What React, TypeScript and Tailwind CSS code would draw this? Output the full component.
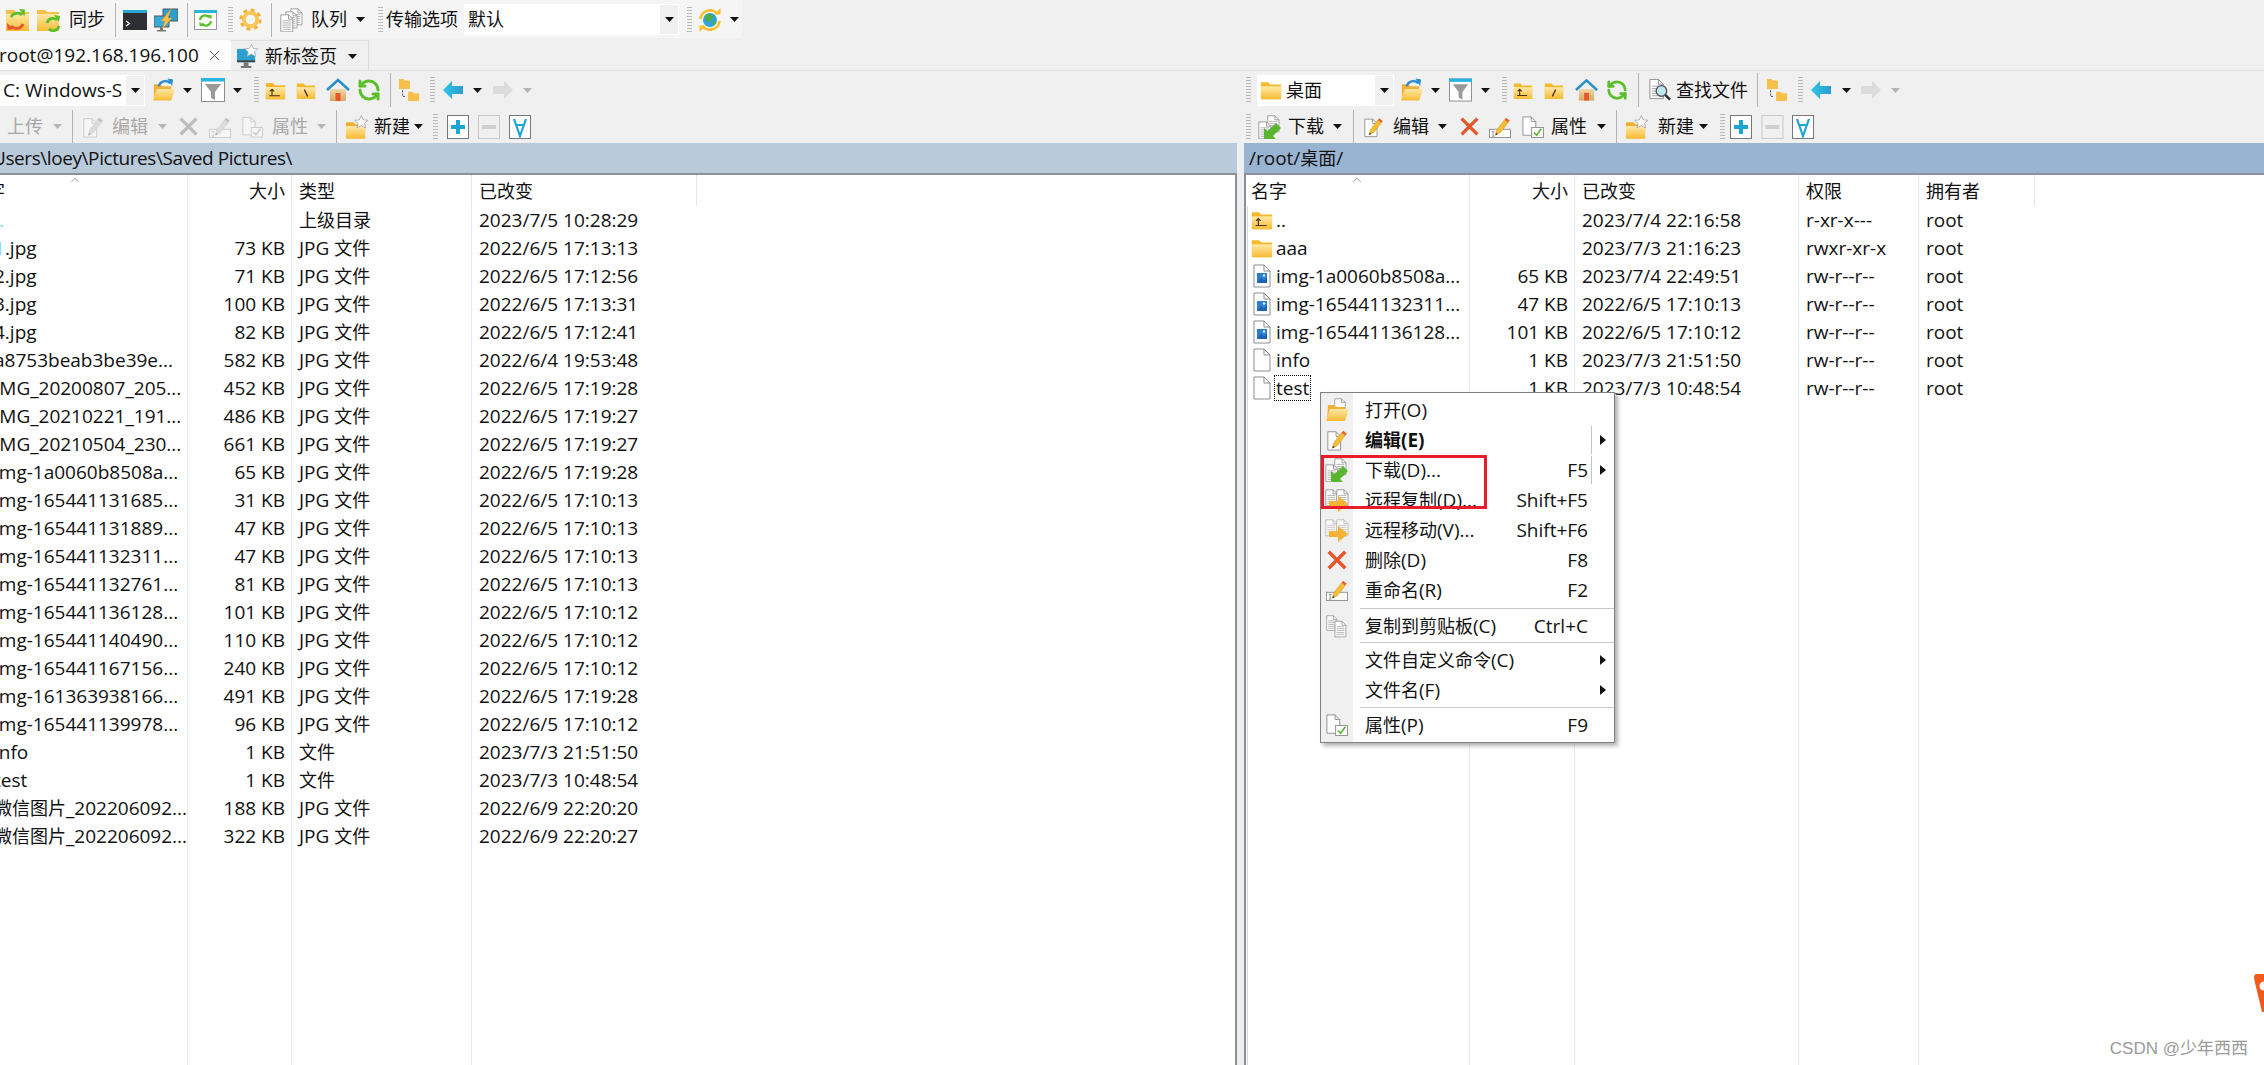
import React from "react";
import { RefreshCcw, X, ChevronUp } from "lucide-react";

// ---- small toolbar bits ----
const Caret = ({ c = "", gray = false }: { c?: string; gray?: boolean }) => (
  <svg viewBox="0 0 9 5" className={`w-[9px] h-[5px] shrink-0 ${c}`}>
    <path d="M0 0h9L4.5 5z" fill={gray ? "#b5b5b5" : "#111"} />
  </svg>
);
const Sep = ({ c = "" }: { c?: string }) => <div className={`w-[1px] h-[34px] bg-[#b4b4b4] shrink-0 ${c}`} />;
const Grip = ({ c = "" }: { c?: string }) => (
  <div className={`w-[5px] h-[26px] shrink-0 bg-[repeating-linear-gradient(#b9b9b9_0_1px,transparent_1px_3px)] ${c}`} />
);
const Label = ({ t, c = "" }: { t: string; c?: string }) => (
  <span className={`text-[18px] whitespace-nowrap shrink-0 ${c}`}>{t}</span>
);

// splits a string so chinese runs get the 18px size and latin stays 19px
const mix = (s: string) =>
  s.split(/([\u4e00-\u9fff]+)/).map((p, i) =>
    /[\u4e00-\u9fff]/.test(p) ? (
      <span key={i} className="text-[18px]">
        {p}
      </span>
    ) : (
      p
    )
  );

// ---- icons ----
type IP = { c?: string };
const Svg = ({ c = "", children, v = "0 0 24 24" }: IP & { children: React.ReactNode; v?: string }) => (
  <svg viewBox={v} fill="none" className={`shrink-0 ${c}`}>
    {children}
  </svg>
);
const FolderPath = () => (
  <>
    <path d="M1 3.5h8l2 2.5h12v16H1z" fill="#f6b82c" />
    <path d="M1 8h22v14H1z" fill="url(#fy)" />
  </>
);
const Pencil = ({ d = "" }: { d?: string }) => (
  <g transform={d}>
    <path d="M7 21l1.5-6L17 4l4 3-8.5 11z" fill="#f7bd35" stroke="#c98a12" strokeWidth=".5" />
    <path d="M17 4l1.6-2 4 3L21 7z" fill="#e8632a" />
    <path d="M7 21l.6-2.6 2 1.5z" fill="#333" />
  </g>
);
const Doc = ({ x = 0, y = 0, s = 1, lines = false }: { x?: number; y?: number; s?: number; lines?: boolean }) => (
  <g transform={`translate(${x} ${y}) scale(${s})`}>
    <path d="M1 1h9l5 5v15H1z" fill="#fff" stroke="#8d8d8d" />
    <path d="M10 1v5h5" stroke="#8d8d8d" />
    {lines && <path d="M3 8h10M3 10.5h10M3 13h10M3 15.5h10M3 18h10" stroke="#a5a5a5" />}
  </g>
);
const SyncFolders = ({ c }: IP) => (
  <Svg c={c} v="0 0 25 24">
    <path d="M1 2h8l2 2h13v19H1z" fill="#f7c04a" />
    <path d="M1 6h23v17H1z" fill="url(#fy)" />
    <path d="M6 9a7 7 0 0 1 11-2" stroke="#5cbf2a" strokeWidth="2.8" />
    <path d="M14 1l6 .5-.5 7z" fill="#5cbf2a" />
    <path d="M18 16a7 7 0 0 1-12 2" stroke="#e8562a" strokeWidth="2.8" />
    <path d="M2 15l.5 7 6-1z" fill="#e8562a" />
  </Svg>
);
const FolderSync = ({ c }: IP) => (
  <Svg c={c} v="0 0 25 24">
    <path d="M1 2h8l2 2h12v19H1z" fill="#f7c04a" />
    <path d="M1 6h22v17H1z" fill="url(#fy)" />
    <path d="M11 15a6 6 0 0 1 10-3" stroke="#5cbf2a" strokeWidth="2.8" />
    <path d="M18 7l6 1-1 6z" fill="#5cbf2a" />
    <path d="M23 18a6 6 0 0 1-10 3" stroke="#5cbf2a" strokeWidth="2.8" />
  </Svg>
);
const Terminal = ({ c }: IP) => (
  <Svg c={c} v="0 0 24 20">
    <rect width="24" height="20" fill="#2d2f33" />
    <rect width="24" height="3" fill="#2aa7cf" />
    <path d="M3 11l3.5 2.5L3 16" stroke="#fff" strokeWidth="1.2" />
  </Svg>
);
const Putty = ({ c }: IP) => (
  <Svg c={c} v="0 0 24 24">
    <path d="M9 1h15v12H9z" fill="#2a9fd0" stroke="#555" />
    <path d="M0 8h15v11H0z" fill="#37a8d8" stroke="#555" />
    <path d="M6 19h3v3h3v1.5H3V22h3z" fill="#777" />
    <path d="M17 1L7 13h4l-3 8 10-11h-4z" fill="#f7c04a" stroke="#d99a17" strokeWidth=".4" />
  </Svg>
);
const SyncPage = ({ c }: IP) => (
  <Svg c={c} v="0 0 23 20">
    <rect x=".5" y=".5" width="22" height="19" fill="#fff" stroke="#9a9a9a" />
    <rect width="23" height="3" fill="#2ab3dd" />
    <path d="M6 10a5 5 0 0 1 9-2.5M17 11a5 5 0 0 1-9 2.5" stroke="#5cbf2a" strokeWidth="2.2" />
    <path d="M13 5l4.5 0 0 4.5zM10 16l-4.5 0 0-4.5z" fill="#5cbf2a" />
  </Svg>
);
const Gear = ({ c }: IP) => (
  <Svg c={c}>
    <circle cx="12" cy="12" r="9.6" stroke="#f2b035" strokeWidth="4" strokeDasharray="3.8 3.74" />
    <circle cx="12" cy="12" r="7" stroke="#f8c556" strokeWidth="4" />
  </Svg>
);
const Queue = ({ c }: IP) => (
  <Svg c={c}>
    <Doc x={11} y={0} s={0.8} lines />
    <Doc x={6} y={3} s={0.8} lines />
    <Doc x={1} y={6} s={0.85} lines />
  </Svg>
);
const Globe = ({ c }: IP) => (
  <Svg c={c}>
    <circle cx="12" cy="12" r="7" fill="#2fa3d8" />
    <path d="M8 7c3-2 6-1 7 1s-2 3-3 5-3 1-4-1-1-3 0-5zM15 14c2-1 3 0 3 1l-3 3z" fill="#4cae3c" />
    <path d="M2.5 11a9.5 9.5 0 0 1 17-5M21.5 13a9.5 9.5 0 0 1-17 5" stroke="#f7c02c" strokeWidth="2.6" />
    <path d="M16 6.5h6.5V0zM8 17.5H1.5V24z" fill="#f7c02c" />
  </Svg>
);
const MonitorStar = ({ c }: IP) => (
  <Svg c={c} v="0 0 22 26">
    <path d="M0 5h19v14H0z" fill="#2a9fd0" />
    <path d="M0 17h19v2H0z" fill="#444" />
    <path d="M7 19h5v4h3v2H4v-2h3z" fill="#777" />
    <path d="M15 0l2 4.5 5 .5-3.700 3.300L19.500 13 15 10.500 10.500 13l1.200-4.700L8 5l5-.5z" fill="#fff" stroke="#9aa0a6" strokeWidth=".7" />
  </Svg>
);
const OpenFolder = ({ c }: IP) => (
  <Svg c={c}>
    <path d="M2 6h7l2 2h9v14H2z" fill="#f2b035" />
    <path d="M5 11h19l-4 12H1z" fill="url(#fy)" />
    <path d="M7 8a7 7 0 0 1 12-3" stroke="#2a8fd0" strokeWidth="2.4" />
    <path d="M16 0l6 1-1 7z" fill="#2a8fd0" />
  </Svg>
);
const Filter = ({ c }: IP) => (
  <Svg c={c}>
    <rect x=".5" y=".5" width="23" height="23" fill="#fff" stroke="#8d8d8d" />
    <rect width="24" height="3.500" fill="#2ab3dd" />
    <path d="M4 6h16l-6 8v8l-4-2v-6z" fill="#9a9a9a" />
  </Svg>
);
const FolderUp = ({ c, slash }: IP & { slash?: "up" | "/" | "\\" }) => (
  <Svg c={c}>
    <FolderPath />
    {slash === "up" && <path d="M5 18h12M8 18v-7M5.500 13L8 10.500 10.500 13" stroke="#4a3510" strokeWidth="1.300" />}
    {slash === "/" && <path d="M10 19l4-8" stroke="#4a3510" strokeWidth="1.600" />}
    {slash === "\\" && <path d="M14 19l-4-8" stroke="#4a3510" strokeWidth="1.600" />}
  </Svg>
);
const Home = ({ c }: IP) => (
  <Svg c={c}>
    <path d="M4 11h16v12H4z" fill="url(#ft)" />
    <path d="M9.500 15h5v8h-5z" fill="#e8562a" />
    <path d="M1 12L12 2l11 10" stroke="#2a8fc8" strokeWidth="2.600" />
  </Svg>
);
const Refresh = ({ c }: IP) => <RefreshCcw className={`shrink-0 ${c}`} color="#5cbf2a" strokeWidth={3} />;
const Find = ({ c }: IP) => (
  <Svg c={c}>
    <Doc x={1} y={0} s={1} lines />
    <circle cx="14" cy="13" r="5.500" fill="#bfe6f5" stroke="#555" strokeWidth="1.400" />
    <path d="M18 17l5 5" stroke="#333" strokeWidth="2.600" />
  </Svg>
);
const Tree = ({ c }: IP) => (
  <Svg c={c}>
    <path d="M1 0h5l1 1.500h6V11H1z" fill="#f7c04a" />
    <path d="M11 14h5l1 1.500h6V24H11z" fill="#f7c04a" />
    <path d="M5 12.500v6.500h4" stroke="#333" strokeDasharray="2 1.500" />
  </Svg>
);
const Arrow = ({ c, dir, gray }: IP & { dir: "l" | "r"; gray?: boolean }) => (
  <Svg c={c} v="0 0 20 18">
    <path
      d={dir === "l" ? "M0 9l9-9v5h11v8H9v5z" : "M20 9l-9-9v5H0v8h11v5z"}
      fill={gray ? "#dcdcdc" : "url(#fc)"}
    />
  </Svg>
);
const Download = ({ c }: IP) => (
  <Svg c={c}>
    <Doc x={9} y={0} s={0.8} lines />
    <Doc x={0} y={6} s={0.85} lines />
    <path d="M6 24V13l3.500 3L18 8l5 5-8 8 3 3z" fill="#5cb531" />
  </Svg>
);
const Edit = ({ c }: IP) => (
  <Svg c={c}>
    <Doc x={1} y={2} s={1} />
    <Pencil />
  </Svg>
);
const Cross = ({ c }: IP) => (
  <Svg c={c}>
    <path d="M3 3l18 18M21 3L3 21" stroke="#e4572a" strokeWidth="3.800" />
  </Svg>
);
const Rename = ({ c }: IP) => (
  <Svg c={c}>
    <rect x=".5" y="14.500" width="23" height="9" fill="#fff" stroke="#8d8d8d" />
    <path d="M3 17h3M3 22h3M4.500 17v5" stroke="#777" strokeWidth=".8" />
    <Pencil />
  </Svg>
);
const Props = ({ c }: IP) => (
  <Svg c={c}>
    <Doc x={0} y={0} s={1} />
    <rect x="10.500" y="12.500" width="13" height="11" fill="#fff" stroke="#8d8d8d" />
    <path d="M13 18l3 3 5-7" stroke="#5cb531" strokeWidth="1.800" />
  </Svg>
);
const NewFolder = ({ c }: IP) => (
  <Svg c={c}>
    <path d="M1 7h8l2 2h10v15H1z" fill="#f2b035" />
    <path d="M1 11h20v13H1z" fill="url(#fy)" />
    <path d="M17 0l2 4.500 5 .5-3.700 3.300L21.500 13 17 10.500 12.500 13l1.200-4.700L10 5l5-.5z" fill="#fff" stroke="#9aa0a6" strokeWidth=".8" />
  </Svg>
);
const BoxIcon = ({ c, kind }: IP & { kind: "plus" | "minus" | "all" }) => (
  <Svg c={c} v="0 0 22 24">
    <rect x=".5" y=".5" width="21" height="23" fill={kind === "minus" ? "#f0f0f0" : "#fff"} stroke={kind === "minus" ? "#c8c8c8" : "#777"} />
    {kind === "plus" && <path d="M11 5v14M4 12h14" stroke="#1fa5d4" strokeWidth="4" />}
    {kind === "minus" && <path d="M4 12h14" stroke="#cfcfcf" strokeWidth="4" />}
    {kind === "all" && <path d="M5 4l6 17 6-17M7.500 10h7" stroke="#1fa5d4" strokeWidth="2.200" />}
  </Svg>
);
const FileIcon = ({ c, img }: IP & { img?: boolean }) => (
  <Svg c={c} v="0 0 18 24">
    <path d="M1 1h10l6 6v16H1z" fill="#fff" stroke="#8d8d8d" />
    <path d="M11 1v6h6" stroke="#8d8d8d" />
    {img && <rect x="4" y="9" width="10" height="10" fill="#2a7fd0" />}
    {img && <path d="M4 19l4-5 3 3 3-4v6z" fill="#1d5fb0" />}
    {img && <circle cx="11" cy="11.500" r="1.200" fill="#dff" />}
  </Svg>
);
const OpenDoc = ({ c }: IP) => (
  <Svg c={c}>
    <Doc x={9} y={0} s={0.75} />
    <path d="M3 7h6l2 2h9v13H2z" fill="#f2b035" />
    <path d="M5 11h19l-4 12H1z" fill="url(#fy)" />
  </Svg>
);
const TwoDocs = ({ c, arrow, faded }: IP & { arrow?: boolean; faded?: boolean }) => (
  <Svg c={c}>
    <g opacity={faded ? 0.6 : 1}>
      <Doc x={0} y={1} s={0.8} lines />
      <Doc x={11} y={1} s={0.8} lines />
    </g>
    {arrow && <path d="M4 13h9V8l10 8-10 8v-5H4z" fill="#f5b335" />}
  </Svg>
);
const CopyDocs = ({ c }: IP) => (
  <Svg c={c}>
    <Doc x={0} y={0} s={0.8} lines />
    <Doc x={9} y={6} s={0.85} lines />
  </Svg>
);

// ---- data ----
const leftRows = [
  ["..", "", "上级目录", "2023/7/5 10:28:29"],
  ["1.jpg", "73 KB", "JPG 文件", "2022/6/5 17:13:13"],
  ["2.jpg", "71 KB", "JPG 文件", "2022/6/5 17:12:56"],
  ["3.jpg", "100 KB", "JPG 文件", "2022/6/5 17:13:31"],
  ["4.jpg", "82 KB", "JPG 文件", "2022/6/5 17:12:41"],
  ["a8753beab3be39e...", "582 KB", "JPG 文件", "2022/6/4 19:53:48"],
  ["IMG_20200807_205...", "452 KB", "JPG 文件", "2022/6/5 17:19:28"],
  ["IMG_20210221_191...", "486 KB", "JPG 文件", "2022/6/5 17:19:27"],
  ["IMG_20210504_230...", "661 KB", "JPG 文件", "2022/6/5 17:19:27"],
  ["img-1a0060b8508a...", "65 KB", "JPG 文件", "2022/6/5 17:19:28"],
  ["img-165441131685...", "31 KB", "JPG 文件", "2022/6/5 17:10:13"],
  ["img-165441131889...", "47 KB", "JPG 文件", "2022/6/5 17:10:13"],
  ["img-165441132311...", "47 KB", "JPG 文件", "2022/6/5 17:10:13"],
  ["img-165441132761...", "81 KB", "JPG 文件", "2022/6/5 17:10:13"],
  ["img-165441136128...", "101 KB", "JPG 文件", "2022/6/5 17:10:12"],
  ["img-165441140490...", "110 KB", "JPG 文件", "2022/6/5 17:10:12"],
  ["img-165441167156...", "240 KB", "JPG 文件", "2022/6/5 17:10:12"],
  ["img-161363938166...", "491 KB", "JPG 文件", "2022/6/5 17:19:28"],
  ["img-165441139978...", "96 KB", "JPG 文件", "2022/6/5 17:10:12"],
  ["info", "1 KB", "文件", "2023/7/3 21:51:50"],
  ["test", "1 KB", "文件", "2023/7/3 10:48:54"],
  ["微信图片_202206092...", "188 KB", "JPG 文件", "2022/6/9 22:20:20"],
  ["微信图片_202206092...", "322 KB", "JPG 文件", "2022/6/9 22:20:27"],
];

const rightRows = [
  ["..", "", "2023/7/4 22:16:58", "r-xr-x---", "root"],
  ["aaa", "", "2023/7/3 21:16:23", "rwxr-xr-x", "root"],
  ["img-1a0060b8508a...", "65 KB", "2023/7/4 22:49:51", "rw-r--r--", "root"],
  ["img-165441132311...", "47 KB", "2022/6/5 17:10:13", "rw-r--r--", "root"],
  ["img-165441136128...", "101 KB", "2022/6/5 17:10:12", "rw-r--r--", "root"],
  ["info", "1 KB", "2023/7/3 21:51:50", "rw-r--r--", "root"],
  ["test", "1 KB", "2023/7/3 10:48:54", "rw-r--r--", "root"],
];

const rowIcon = (name: string) => {
  if (name === "..") return <FolderUp slash="up" c="w-[22px] h-[24px]" />;
  if (name === "aaa") return <FolderUp c="w-[22px] h-[24px]" />;
  if (name === "info" || name === "test") return <FileIcon c="w-[22px] h-[24px]" />;
  return <FileIcon img c="w-[22px] h-[24px]" />;
};

const NameColumn = ({ names, left }: { names: string[]; left?: boolean }) => (
  <div className="w-[226px] h-full border-r border-[#e6ecf6] shrink-0 overflow-hidden">
    <div className="relative h-[31px] leading-[32px] pl-[7px]">
      <span className="text-[18px]">名字</span>
      <ChevronUp className="absolute left-[106px] top-[-2px] w-[14px] h-[14px] text-[#777]" strokeWidth={1.2} />
    </div>
    <div className={`ml-[3px] pl-[3px] border-l h-full ${left ? "border-transparent" : "border-[#cddaf0]"}`}>
      {names.map((n, i) => (
        <div key={i} className="h-[28px] flex items-center whitespace-nowrap">
          {rowIcon(n)}
          {n === "test" && !left ? (
            <span className="ml-[1px] px-[1px] h-[26px] leading-[24px] border border-dotted border-black">{n}</span>
          ) : left && i === 0 ? (
            <span className="ml-[3px] text-[#7fdcf0]">{n}</span>
          ) : left && i === 1 ? (
            <span className="ml-[3px]">
              <span className="text-[#7fdcf0]">{n[0]}</span>
              {n.slice(1)}
            </span>
          ) : (
            <span className="ml-[3px]">{mix(n)}</span>
          )}
        </div>
      ))}
    </div>
  </div>
);

// the last column has its divider in the header only
const Column = ({ title, cells, w, right, last }: { title: string; cells: string[]; w: string; right?: boolean; last?: boolean }) => (
  <div className={`${w} h-full shrink-0 whitespace-nowrap flex flex-col ${right ? "text-right" : ""}`}>
    <div className={`h-[31px] shrink-0 leading-[32px] text-[18px] border-r border-[#e6e6e6] ${right ? "pr-[6px]" : "pl-[7px]"}`}>{title}</div>
    <div className={`flex-1 border-r ${last ? "border-transparent" : "border-[#e6ecf6]"} ${right ? "pr-[6px]" : "pl-[7px]"}`}>
      {cells.map((v, i) => (
        <div key={i} className="h-[28px] leading-[28px]">
          {mix(v)}
        </div>
      ))}
    </div>
  </div>
);

const MenuRow = ({
  icon,
  text,
  keys,
  arrow,
  split,
  bold,
}: {
  icon?: React.ReactNode;
  text: string;
  keys?: string;
  arrow?: boolean;
  split?: boolean;
  bold?: boolean;
}) => (
  <div className="h-[30px] flex items-center">
    <div className="w-[32px] flex justify-center shrink-0">{icon}</div>
    <div className={`ml-[12px] flex-1 whitespace-nowrap ${bold ? "font-bold" : ""}`}>{mix(text)}</div>
    <div className="whitespace-nowrap">{keys}</div>
    <div className={`w-[23px] ml-[3px] h-[28px] flex items-center justify-center border-l ${split ? "border-[#c4c4c4]" : "border-transparent"}`}>
      {arrow && (
        <svg viewBox="0 0 6 10" className="w-[6px] h-[10px]">
          <path d="M0 0l6 5-6 5z" fill="#111" />
        </svg>
      )}
    </div>
  </div>
);
const MenuSep = ({ c }: { c: string }) => <div className={`ml-[39px] h-[1px] bg-[#c8c8c8] ${c}`} />;

export default function App() {
  return (
    <div className="relative w-[2264px] h-[1065px] overflow-hidden bg-[#f0f0f0] text-[19px] text-[#111] font-['Open_Sans','Noto_Sans_CJK_SC',sans-serif]">
      <svg className="absolute w-0 h-0">
        <defs>
          <linearGradient id="fy" x1="0" y1="0" x2="0" y2="1">
            <stop offset="0" stopColor="#ffe9a8" />
            <stop offset="1" stopColor="#f6bb33" />
          </linearGradient>
          <linearGradient id="ft" x1="0" y1="0" x2="0" y2="1">
            <stop offset="0" stopColor="#f0d8a8" />
            <stop offset="1" stopColor="#d9a860" />
          </linearGradient>
          <linearGradient id="fc" x1="0" y1="0" x2="1" y2="0">
            <stop offset="0" stopColor="#2ec4e8" />
            <stop offset="1" stopColor="#2a9fd0" />
          </linearGradient>
        </defs>
      </svg>

      {/* main toolbar */}
      <div className="h-[38px] pt-[1px] flex items-center w-[742px] bg-[#f5f5f5]">
        <SyncFolders c="ml-[5px] w-[25px] h-[24px]" />
        <FolderSync c="ml-[6px] w-[25px] h-[24px]" />
        <Label t="同步" c="ml-[8px]" />
        <Sep c="ml-[10px]" />
        <Terminal c="ml-[7px] w-[24px] h-[20px]" />
        <Putty c="ml-[7px] w-[24px] h-[24px]" />
        <Sep c="ml-[9px]" />
        <SyncPage c="ml-[6px] w-[23px] h-[20px]" />
        <Grip c="ml-[11px]" />
        <Gear c="ml-[6px] w-[23px] h-[23px]" />
        <Sep c="ml-[9px]" />
        <Queue c="ml-[7px] w-[24px] h-[24px]" />
        <Label t="队列" c="ml-[8px]" />
        <Caret c="ml-[9px]" />
        <Grip c="ml-[13px]" />
        <Label t="传输选项" c="ml-[3px]" />
        <div className="ml-[6px] w-[215px] h-[31px] bg-white border border-white flex items-center justify-between">
          <Label t="默认" c="ml-[3px]" />
          <div className="w-[18px] h-full bg-[#f0f0f0] flex items-center justify-center">
            <Caret />
          </div>
        </div>
        <Grip c="ml-[8px]" />
        <Globe c="ml-[6px] w-[24px] h-[24px]" />
        <Caret c="ml-[8px]" />
      </div>

      {/* tabs */}
      <div className="h-[33px] pt-[2px] border-b border-[#e0e0e0] flex">
        <div className="w-[231px] h-[30px] bg-[#fcfcfc] flex items-center whitespace-nowrap overflow-hidden">
          <span className="-ml-[1px]">root@192.168.196.100</span>
          <X className="ml-[7px] w-[17px] h-[17px] text-[#444] shrink-0" strokeWidth={1.3} />
        </div>
        <div className="w-[138px] h-[31px] border-t border-r border-[#dcdcdc] flex items-center">
          <MonitorStar c="ml-[6px] w-[21px] h-[25px]" />
          <Label t="新标签页" c="ml-[7px]" />
          <Caret c="ml-[11px]" />
        </div>
      </div>

      <div className="flex h-[994px]">
        {/* left pane */}
        <div className="w-[1237px] shrink-0 flex flex-col overflow-hidden">
          <div className="h-[37px] pt-[1px] flex items-center">
            <div className="w-[145px] h-[31px] bg-white border border-white flex items-center justify-between whitespace-nowrap">
              <span className="ml-[2px]">C: Windows-S</span>
              <div className="w-[18px] h-full bg-[#f0f0f0] flex items-center justify-center shrink-0">
                <Caret />
              </div>
            </div>
            <OpenFolder c="ml-[7px] w-[23px] h-[24px]" />
            <Caret c="ml-[8px]" />
            <Filter c="ml-[9px] w-[24px] h-[24px]" />
            <Caret c="ml-[8px]" />
            <Grip c="ml-[12px]" />
            <FolderUp slash="up" c="ml-[6px] w-[21px] h-[21px]" />
            <FolderUp slash="\" c="ml-[10px] w-[20px] h-[21px]" />
            <Home c="ml-[10px] w-[24px] h-[24px]" />
            <Refresh c="ml-[7px] w-[24px] h-[24px]" />
            <Sep c="ml-[9px]" />
            <Tree c="ml-[7px] w-[22px] h-[24px]" />
            <Grip c="ml-[10px]" />
            <Arrow dir="l" c="ml-[8px] w-[20px] h-[18px]" />
            <Caret c="ml-[10px]" />
            <Arrow dir="r" gray c="ml-[11px] w-[20px] h-[18px]" />
            <Caret gray c="ml-[10px]" />
          </div>
          <div className="h-[35px] pt-[2px] flex items-center">
            <Label t="上传" c="ml-[7px] text-[#a8a8a8]" />
            <Caret gray c="ml-[10px]" />
            <Sep c="ml-[10px]" />
            <Edit c="ml-[9px] w-[22px] h-[24px] grayscale opacity-40" />
            <Label t="编辑" c="ml-[8px] text-[#a8a8a8]" />
            <Caret gray c="ml-[10px]" />
            <Cross c="ml-[11px] w-[21px] h-[21px] grayscale opacity-40" />
            <Rename c="ml-[10px] w-[22px] h-[24px] grayscale opacity-40" />
            <Props c="ml-[11px] w-[21px] h-[24px] grayscale opacity-40" />
            <Label t="属性" c="ml-[9px] text-[#a8a8a8]" />
            <Caret gray c="ml-[9px]" />
            <Sep c="ml-[10px]" />
            <NewFolder c="ml-[8px] w-[23px] h-[24px]" />
            <Label t="新建" c="ml-[6px]" />
            <Caret c="ml-[4px]" />
            <Grip c="ml-[10px]" />
            <BoxIcon kind="plus" c="ml-[9px] w-[22px] h-[24px]" />
            <BoxIcon kind="minus" c="ml-[9px] w-[22px] h-[24px]" />
            <BoxIcon kind="all" c="ml-[9px] w-[22px] h-[24px]" />
          </div>
          <div className="h-[30px] bg-[#b9cadb] leading-[30px] whitespace-nowrap overflow-hidden">
            <span className="block -ml-[8px] tracking-[-0.42px]">Users\loey\Pictures\Saved Pictures\</span>
          </div>
          <div className="flex-1 min-h-0 bg-white border-t-2 border-r-2 border-[#8b9099] overflow-hidden">
            <div className="flex h-full -ml-[38px]">
              <NameColumn left names={leftRows.map((r) => r[0])} />
              <Column title="大小" right w="w-[104px]" cells={leftRows.map((r) => r[1])} />
              <Column title="类型" w="w-[180px]" cells={leftRows.map((r) => r[2])} />
              <Column title="已改变" last w="w-[225px]" cells={leftRows.map((r) => r[3])} />
            </div>
          </div>
        </div>

        {/* splitter */}
        <div className="w-[7px] shrink-0" />

        {/* right pane */}
        <div className="flex-1 flex flex-col overflow-hidden">
          <div className="h-[37px] pt-[1px] flex items-center">
            <Grip c="ml-[2px]" />
            <div className="ml-[6px] w-[137px] h-[31px] bg-white border border-white flex items-center">
              <FolderUp c="ml-[2px] w-[22px] h-[22px]" />
              <Label t="桌面" c="ml-[4px]" />
              <div className="ml-auto w-[18px] h-full bg-[#f0f0f0] flex items-center justify-center">
                <Caret />
              </div>
            </div>
            <OpenFolder c="ml-[6px] w-[23px] h-[24px]" />
            <Caret c="ml-[8px]" />
            <Filter c="ml-[9px] w-[23px] h-[24px]" />
            <Caret c="ml-[9px]" />
            <Grip c="ml-[12px]" />
            <FolderUp slash="up" c="ml-[6px] w-[20px] h-[21px]" />
            <FolderUp slash="/" c="ml-[11px] w-[20px] h-[21px]" />
            <Home c="ml-[11px] w-[23px] h-[24px]" />
            <Refresh c="ml-[8px] w-[22px] h-[24px]" />
            <Sep c="ml-[10px]" />
            <Find c="ml-[9px] w-[23px] h-[24px]" />
            <Label t="查找文件" c="ml-[5px]" />
            <Sep c="ml-[9px]" />
            <Tree c="ml-[8px] w-[22px] h-[24px]" />
            <Grip c="ml-[10px]" />
            <Arrow dir="l" c="ml-[8px] w-[20px] h-[18px]" />
            <Caret c="ml-[11px]" />
            <Arrow dir="r" gray c="ml-[10px] w-[20px] h-[18px]" />
            <Caret gray c="ml-[10px]" />
          </div>
          <div className="h-[35px] pt-[2px] flex items-center">
            <Grip c="ml-[2px]" />
            <Download c="ml-[7px] w-[24px] h-[24px]" />
            <Label t="下载" c="ml-[6px]" />
            <Caret c="ml-[9px]" />
            <Sep c="ml-[11px]" />
            <Edit c="ml-[9px] w-[21px] h-[24px]" />
            <Label t="编辑" c="ml-[9px]" />
            <Caret c="ml-[9px]" />
            <Cross c="ml-[12px] w-[21px] h-[21px]" />
            <Rename c="ml-[9px] w-[22px] h-[24px]" />
            <Props c="ml-[11px] w-[22px] h-[24px]" />
            <Label t="属性" c="ml-[7px]" />
            <Caret c="ml-[10px]" />
            <Sep c="ml-[10px]" />
            <NewFolder c="ml-[8px] w-[23px] h-[24px]" />
            <Label t="新建" c="ml-[10px]" />
            <Caret c="ml-[5px]" />
            <Grip c="ml-[12px]" />
            <BoxIcon kind="plus" c="ml-[5px] w-[22px] h-[24px]" />
            <BoxIcon kind="minus" c="ml-[9px] w-[23px] h-[24px]" />
            <BoxIcon kind="all" c="ml-[8px] w-[22px] h-[24px]" />
          </div>
          <div className="h-[30px] bg-[#99b4d1] leading-[30px] pl-[5px]">{mix("/root/桌面/")}</div>
          <div className="flex-1 min-h-0 bg-white border-t-2 border-l-2 border-[#8b9099] overflow-hidden">
            <div className="flex h-full -ml-[2px]">
              <NameColumn names={rightRows.map((r) => r[0])} />
              <Column title="大小" right w="w-[105px]" cells={rightRows.map((r) => r[1])} />
              <Column title="已改变" w="w-[224px]" cells={rightRows.map((r) => r[2])} />
              <Column title="权限" w="w-[120px]" cells={rightRows.map((r) => r[3])} />
              <Column title="拥有者" last w="w-[116px]" cells={rightRows.map((r) => r[4])} />
            </div>
          </div>
        </div>
      </div>

      {/* context menu */}
      <div className="absolute left-[1320px] top-[392px] w-[295px] h-[351px] py-[2px] border border-[#808080] shadow-[3px_3px_4px_rgba(0,0,0,0.3)] bg-[linear-gradient(to_right,#f0f0f0_32px,#ffffff_32px)]">
        <MenuRow icon={<OpenDoc c="w-[24px] h-[24px]" />} text="打开(O)" />
        <MenuRow icon={<Edit c="w-[22px] h-[24px]" />} text="编辑(E)" bold arrow split />
        <MenuRow icon={<Download c="w-[24px] h-[24px]" />} text="下载(D)..." keys="F5" arrow split />
        <MenuRow icon={<TwoDocs arrow c="w-[24px] h-[24px]" />} text="远程复制(D)..." keys="Shift+F5" />
        <MenuRow icon={<TwoDocs arrow faded c="w-[24px] h-[24px]" />} text="远程移动(V)..." keys="Shift+F6" />
        <MenuRow icon={<Cross c="w-[22px] h-[22px]" />} text="删除(D)" keys="F8" />
        <MenuRow icon={<Rename c="w-[22px] h-[24px]" />} text="重命名(R)" keys="F2" />
        <MenuSep c="mt-[3px] mb-[2px]" />
        <MenuRow icon={<CopyDocs c="w-[22px] h-[24px]" />} text="复制到剪贴板(C)" keys="Ctrl+C" />
        <MenuSep c="mt-[1px] mb-[2px]" />
        <MenuRow text="文件自定义命令(C)" arrow />
        <MenuRow text="文件名(F)" arrow />
        <MenuSep c="mt-[2px] mb-[2px]" />
        <MenuRow icon={<Props c="w-[22px] h-[24px]" />} text="属性(P)" keys="F9" />
        <div className="absolute left-0 top-[62px] w-[166px] h-[54px] border-[3px] border-[#e81c2a]" />
      </div>

      {/* watermark */}
      <div className="absolute right-[16px] top-[1036px] text-[17px] text-[#9a9a9a] whitespace-nowrap font-['Liberation_Sans','Noto_Sans_CJK_SC',sans-serif]">
        CSDN @少年西西
      </div>
      <svg viewBox="0 0 10 38" className="absolute right-0 top-[974px] w-[10px] h-[38px]">
        <path d="M2 0h8v38H8C6 28 2 14 0 4c0-2 1-4 2-4z" fill="#f4591c" />
        <circle cx="10" cy="12" r="4.500" fill="#fff" />
      </svg>
    </div>
  );
}
